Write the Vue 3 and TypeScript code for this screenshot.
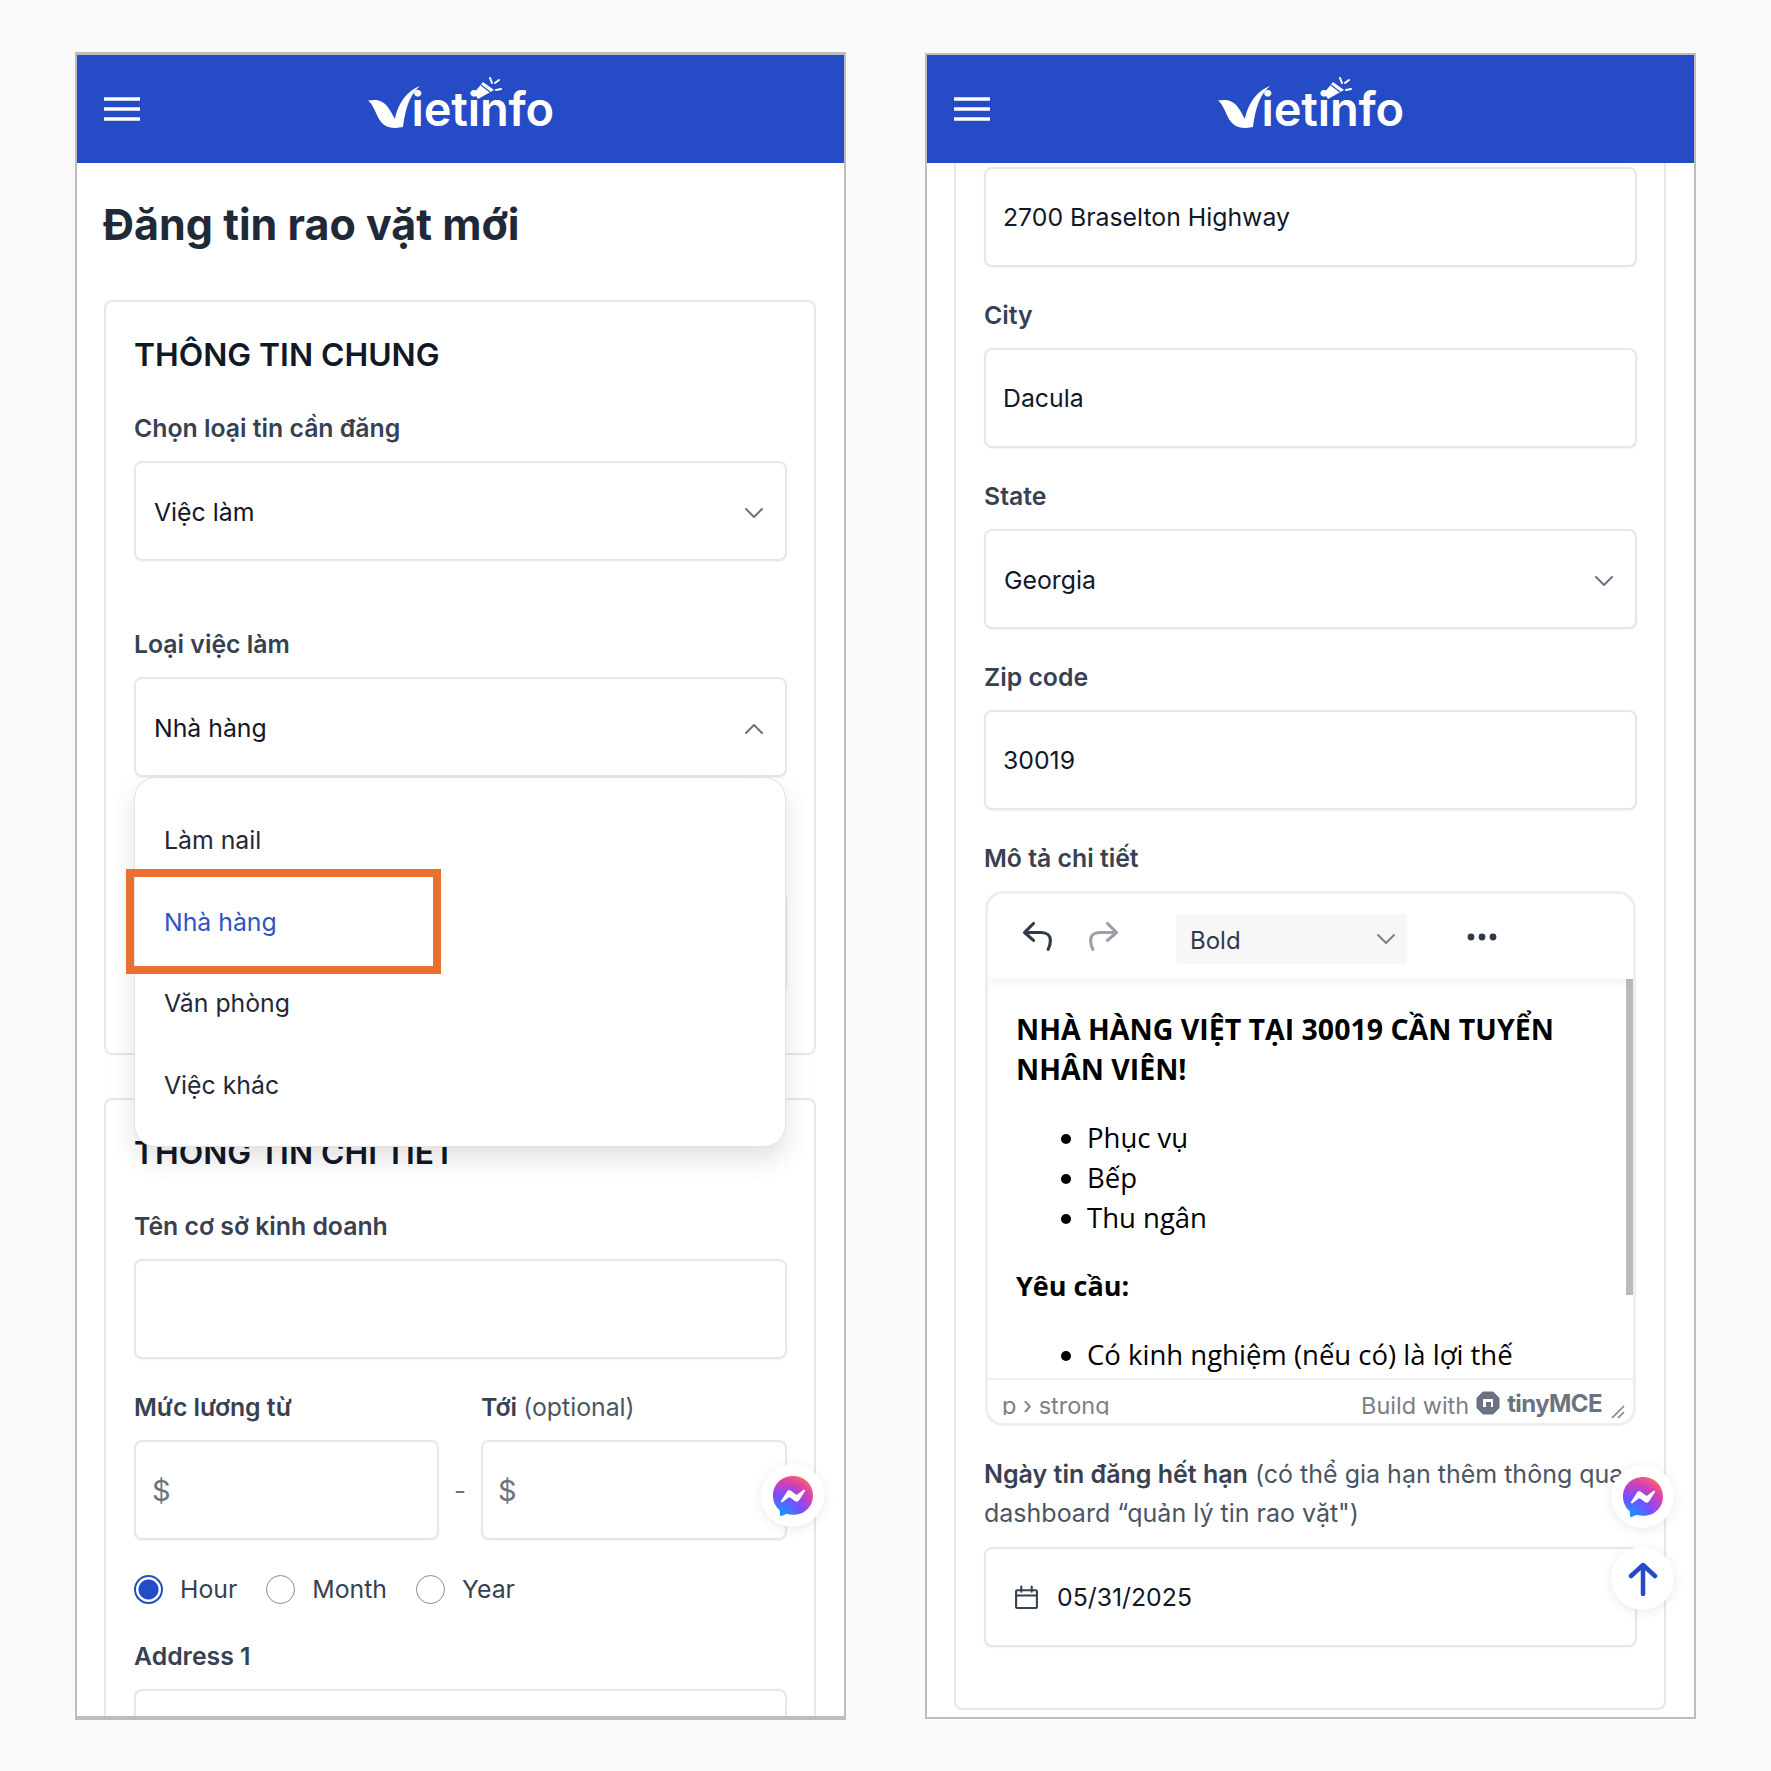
<script setup lang="ts">
import { ref } from "vue";

const jobTypes = ["Làm nail", "Nhà hàng", "Văn phòng", "Việc khác"];
const currentJob = ref("Nhà hàng");

const periods = ["Hour", "Month", "Year"];
const period = ref("Hour");
</script>

<template>
  <div class="page">
    <!-- left phone -->
    <section class="phone phone-left">
      <header class="topbar">
        <svg class="burger" width="36" height="24" viewBox="0 0 36 24">
          <path d="M0 2h36M0 12h36M0 22h36" stroke="#fff" stroke-width="3.4" />
        </svg>
        <div class="logo">
          <svg class="logo-v" width="53" height="43" viewBox="0 0 53 43">
            <path d="M0 14.5C8 13 14 14 19 20c4 5 6 10 8 13C29 22 36 6 52 0 42 9 38 20 35 41l-7 1C16 42 12 36 8 27 5 20 3 17 0 14.5z" fill="#fff" />
          </svg>
          <span class="logo-text">ietinfo</span>
          <svg class="logo-horn" width="29" height="28" viewBox="0 0 29 28">
            <path d="M1 17 10 6l11 8-16 9z" fill="#fff" />
            <path d="M8 9l9 7" stroke="#254bc7" stroke-width="1.2" />
            <path d="M17 2l2 5M22 7l4-3M23 14l5-1" stroke="#fff" stroke-width="2" stroke-linecap="round" />
          </svg>
        </div>
        <span></span>
      </header>

      <main class="content">
        <h1 class="title">Đăng tin rao vặt mới</h1>

        <div class="card card-general">
          <h2 class="card-title">THÔNG TIN CHUNG</h2>

          <label class="label label-first">Chọn loại tin cần đăng</label>
          <div class="select">
            <span>Việc làm</span>
            <svg class="chevron" width="20" height="12" viewBox="0 0 20 12">
              <path d="M2 2l8 8 8-8" fill="none" stroke="#6b7280" stroke-width="2" stroke-linecap="round" stroke-linejoin="round" />
            </svg>
          </div>

          <label class="label label-gap">Loại việc làm</label>
          <div class="select-wrap">
            <div class="select">
              <span>{{ currentJob }}</span>
              <svg class="chevron" width="20" height="12" viewBox="0 0 20 12">
                <path d="M2 10l8-8 8 8" fill="none" stroke="#6b7280" stroke-width="2" stroke-linecap="round" stroke-linejoin="round" />
              </svg>
            </div>
            <ul class="menu">
              <li
                v-for="job in jobTypes"
                :key="job"
                class="menu-item"
                :class="{ active: job === currentJob }"
                @click="currentJob = job"
              >
                {{ job }}
              </li>
            </ul>
            <div class="callout"></div>
          </div>

          <div class="select select-hidden"></div>
        </div>

        <div class="card card-detail">
          <h2 class="card-title">THÔNG TIN CHI TIẾT</h2>

          <label class="label label-business">Tên cơ sở kinh doanh</label>
          <input class="field" type="text" />

          <div class="salary-labels">
            <label class="label">Mức lương từ</label>
            <label class="label">Tới <span class="optional">(optional)</span></label>
          </div>
          <div class="salary">
            <div class="money"><span>$</span></div>
            <span class="dash">-</span>
            <div class="money"><span>$</span></div>
          </div>

          <div class="periods">
            <label v-for="p in periods" :key="p" class="period">
              <input v-model="period" class="radio" type="radio" :value="p" />
              <span>{{ p }}</span>
            </label>
          </div>

          <label class="label label-address">Address 1</label>
          <input class="field" type="text" />
        </div>
      </main>

      <a class="fab fab-chat">
        <svg width="40" height="40" viewBox="2 2 20 20">
          <defs>
            <radialGradient id="chatLeft" cx="0.2" cy="1" r="1.15">
              <stop offset="0" stop-color="#0a9bff" />
              <stop offset="0.45" stop-color="#7a4dff" />
              <stop offset="0.75" stop-color="#d63fb0" />
              <stop offset="1" stop-color="#ff6f5f" />
            </radialGradient>
          </defs>
          <path d="M12 2C6.36 2 2 6.13 2 11.7c0 2.91 1.19 5.44 3.14 7.17.16.14.26.35.27.57l.05 1.78c.02.57.61.94 1.13.71l1.98-.87c.17-.07.36-.09.53-.04.91.25 1.88.38 2.9.38 5.64 0 10-4.13 10-9.7S17.64 2 12 2z" fill="url(#chatLeft)" />
          <path d="M5.99 14.54l2.94-4.66c.47-.74 1.47-.93 2.17-.4l2.34 1.75c.21.16.51.16.72 0l3.16-2.4c.42-.32.97.18.69.63l-2.94 4.66c-.47.74-1.47.93-2.17.4l-2.34-1.75a.6.6 0 0 0-.72 0l-3.16 2.4c-.42.32-.97-.18-.69-.63z" fill="#fff" />
        </svg>
      </a>
    </section>

    <!-- right phone -->
    <section class="phone phone-right">
      <header class="topbar">
        <svg class="burger" width="36" height="24" viewBox="0 0 36 24">
          <path d="M0 2h36M0 12h36M0 22h36" stroke="#fff" stroke-width="3.4" />
        </svg>
        <div class="logo">
          <svg class="logo-v" width="53" height="43" viewBox="0 0 53 43">
            <path d="M0 14.5C8 13 14 14 19 20c4 5 6 10 8 13C29 22 36 6 52 0 42 9 38 20 35 41l-7 1C16 42 12 36 8 27 5 20 3 17 0 14.5z" fill="#fff" />
          </svg>
          <span class="logo-text">ietinfo</span>
          <svg class="logo-horn" width="29" height="28" viewBox="0 0 29 28">
            <path d="M1 17 10 6l11 8-16 9z" fill="#fff" />
            <path d="M8 9l9 7" stroke="#254bc7" stroke-width="1.2" />
            <path d="M17 2l2 5M22 7l4-3M23 14l5-1" stroke="#fff" stroke-width="2" stroke-linecap="round" />
          </svg>
        </div>
        <span></span>
      </header>

      <main class="content">
        <div class="card card-scrolled">
          <input class="field" type="text" value="2700 Braselton Highway" />

          <label class="label label-row">City</label>
          <input class="field" type="text" value="Dacula" />

          <label class="label label-row">State</label>
          <div class="select">
            <span>Georgia</span>
            <svg class="chevron" width="20" height="12" viewBox="0 0 20 12">
              <path d="M2 2l8 8 8-8" fill="none" stroke="#6b7280" stroke-width="2" stroke-linecap="round" stroke-linejoin="round" />
            </svg>
          </div>

          <label class="label label-row">Zip code</label>
          <input class="field" type="text" value="30019" />

          <label class="label label-row">Mô tả chi tiết</label>
          <div class="editor">
            <div class="editor-bar">
              <svg class="tool" width="36" height="36" viewBox="0 0 32 32">
                <path d="M12 4 4 12l8 7M4 12h15c5 0 8 3 8 7 0 3-1 6-2 8" fill="none" stroke="#2f3a4a" stroke-width="2.800" stroke-linecap="round" stroke-linejoin="round" />
              </svg>
              <svg class="tool tool-redo" width="36" height="36" viewBox="0 0 32 32">
                <path d="M20 4l8 8-8 7M28 12H13c-5 0-8 3-8 7 0 3 1 6 2 8" fill="none" stroke="#9aa0a6" stroke-width="2.800" stroke-linecap="round" stroke-linejoin="round" />
              </svg>
              <div class="format">
                <span class="format-name">Bold</span>
                <svg width="20" height="12" viewBox="0 0 20 12">
                  <path d="M2 2l8 8 8-8" fill="none" stroke="#7b8088" stroke-width="2" stroke-linecap="round" stroke-linejoin="round" />
                </svg>
              </div>
              <svg class="more" width="30" height="8" viewBox="0 0 30 8">
                <circle cx="4" cy="4" r="3.4" fill="#2f3a4a" />
                <circle cx="15" cy="4" r="3.4" fill="#2f3a4a" />
                <circle cx="26" cy="4" r="3.4" fill="#2f3a4a" />
              </svg>
            </div>

            <div class="editor-body">
              <p class="headline">NHÀ HÀNG VIỆT TẠI 30019 CẦN TUYỂN NHÂN VIÊN!</p>
              <ul>
                <li>Phục vụ</li>
                <li>Bếp</li>
                <li>Thu ngân</li>
              </ul>
              <p class="strong">Yêu cầu:</p>
              <ul>
                <li>Có kinh nghiệm (nếu có) là lợi thế</li>
              </ul>
              <div class="scroll-thumb"></div>
            </div>

            <div class="editor-status">
              <span class="path">p › strong</span>
              <span class="brand">
                Build with
                <svg width="24" height="24" viewBox="0 0 24 24">
                  <path d="M7 1h10l6 6v10l-6 6H7l-6-6V7z" fill="#6b7280" stroke="#6b7280" stroke-width="1" stroke-linejoin="round" />
                  <path d="M7 8h10v8H7z" fill="#fff" />
                  <path d="M10 11h5v6h-5z" fill="#6b7280" />
                </svg>
                <b>tinyMCE</b>
                <svg class="grip" width="14" height="14" viewBox="0 0 14 14">
                  <path d="M1 13 13 1M7 13l6-6" stroke="#7b8088" stroke-width="1.6" />
                </svg>
              </span>
            </div>
          </div>

          <p class="expire">
            <b>Ngày tin đăng hết hạn</b> (có thể gia hạn thêm thông qua dashboard “quản lý tin rao vặt")
          </p>
          <div class="date">
            <svg width="25" height="25" viewBox="0 0 24 24">
              <path d="M3 5h18a1 1 0 0 1 1 1v15a1 1 0 0 1-1 1H3a1 1 0 0 1-1-1V6a1 1 0 0 1 1-1zM2 10h20M7 1.500v5M17 1.500v5" fill="none" stroke="#374151" stroke-width="2" stroke-linecap="round" />
            </svg>
            <span>05/31/2025</span>
          </div>
        </div>
      </main>

      <a class="fab fab-chat">
        <svg width="40" height="40" viewBox="2 2 20 20">
          <defs>
            <radialGradient id="chatRight" cx="0.2" cy="1" r="1.15">
              <stop offset="0" stop-color="#0a9bff" />
              <stop offset="0.45" stop-color="#7a4dff" />
              <stop offset="0.75" stop-color="#d63fb0" />
              <stop offset="1" stop-color="#ff6f5f" />
            </radialGradient>
          </defs>
          <path d="M12 2C6.36 2 2 6.13 2 11.7c0 2.91 1.19 5.44 3.14 7.17.16.14.26.35.27.57l.05 1.78c.02.57.61.94 1.13.71l1.98-.87c.17-.07.36-.09.53-.04.91.25 1.88.38 2.9.38 5.64 0 10-4.13 10-9.7S17.64 2 12 2z" fill="url(#chatRight)" />
          <path d="M5.99 14.54l2.94-4.66c.47-.74 1.47-.93 2.17-.4l2.34 1.75c.21.16.51.16.72 0l3.16-2.4c.42-.32.97.18.69.63l-2.94 4.66c-.47.74-1.47.93-2.17.4l-2.34-1.75a.6.6 0 0 0-.72 0l-3.16 2.4c-.42.32-.97-.18-.69-.63z" fill="#fff" />
        </svg>
      </a>
      <a class="fab fab-top">
        <svg width="30" height="34" viewBox="0 0 30 34">
          <path d="M15 32V3M3 14 15 3l12 11" fill="none" stroke="#254bc7" stroke-width="4.500" stroke-linecap="round" stroke-linejoin="round" />
        </svg>
      </a>
    </section>
  </div>
</template>

<style>
html,
body {
  margin: 0;
  background: #fafafa;
}
</style>

<style scoped>
.page {
  width: 1771px;
  height: 1771px;
  box-sizing: border-box;
  display: flex;
  align-items: flex-start;
  gap: 79px;
  padding: 52px 75px 0;
  background: #fafafa;
  font-family: Inter, "Noto Sans", sans-serif;
  color: #111827;
}

.phone {
  position: relative;
  width: 771px;
  box-sizing: border-box;
  background: #fff;
  overflow: hidden;
  border: 2px solid #bdbdbd;
}

.phone-left {
  height: 1668px;
  border-top-width: 3px;
  border-bottom-width: 4px;
}

.phone-right {
  height: 1666px;
  margin-top: 1px;
  border-top-width: 2px;
  border-bottom-width: 2px;
}

.topbar {
  height: 108px;
  padding: 0 27px;
  display: grid;
  grid-template-columns: 1fr auto 1fr;
  align-items: center;
  background: #254bc7;
}

.logo {
  position: relative;
  display: flex;
  align-items: flex-end;
  height: 51px;
  width: 186px;
  margin-bottom: 11px;
}

.logo-v {
  flex: none;
  margin-right: -9px;
}

.logo-text {
  font-family: Inter, sans-serif;
  font-weight: 600;
  font-size: 47px;
  line-height: 40px;
  letter-spacing: -0.15px;
  color: #fff;
}

.logo-horn {
  position: absolute;
  left: 105px;
  top: -2px;
}

.content {
  padding: 0 28px 0 27px;
}

.title {
  margin: 0 0 54px -1px;
  padding-top: 39px;
  font-size: 43px;
  line-height: 44px;
  font-weight: 700;
  color: #1f2937;
}

.card {
  border: 2px solid #e5e7eb;
  border-radius: 8px;
  padding: 0 27px 0 28px;
  background: #fff;
}

.card-general {
  padding-top: 33px;
  padding-bottom: 63px;
  height: 755px;
  box-sizing: border-box;
}

.card-detail {
  margin-top: 43px;
  padding-top: 33px;
}

.card-scrolled {
  border-top: 0;
  border-radius: 0 0 8px 8px;
  padding-top: 4px;
  padding-bottom: 61px;
}

.card-title {
  margin: 0;
  font-size: 31.800px;
  line-height: 40px;
  font-weight: 600;
  color: #111827;
}

.label {
  display: block;
  margin-bottom: 18px;
  font-size: 24.800px;
  line-height: 30px;
  font-weight: 600;
  color: #374151;
}

.label-first {
  margin-top: 38px;
}

.label-gap {
  margin-top: 68px;
}

.label-business {
  margin-top: 38px;
}

.label-address {
  margin-top: 37px;
}

.label-row {
  margin-top: 33px;
}

.optional {
  font-weight: 400;
  color: #4b5563;
}

.field,
.select,
.money,
.date {
  display: flex;
  align-items: center;
  width: 100%;
  height: 100px;
  box-sizing: border-box;
  background: #fff;
  border: 2px solid #e5e7eb;
  border-radius: 8px;
  box-shadow: 0 1px 2px rgba(0, 0, 0, 0.05);
  font-family: inherit;
  font-size: 24.800px;
  color: #111827;
}

.field {
  padding: 0 17px;
  outline: none;
}

.select {
  justify-content: space-between;
  padding: 1px 21px 0 18px;
}

.chevron {
  margin-top: 2px;
}

.select-wrap {
  position: relative;
}

.select-hidden {
  margin-top: 115px;
}

.menu {
  position: absolute;
  z-index: 2;
  top: 100%;
  left: 0;
  right: 1px;
  margin: 0;
  padding: 22px 0 20px;
  list-style: none;
  background: #fff;
  border: 1px solid #dfe2e7;
  border-radius: 22px;
  box-shadow: 0 12px 26px rgba(0, 0, 0, 0.12);
}

.menu-item {
  height: 81.500px;
  line-height: 81.500px;
  padding-left: 29px;
  font-size: 24.800px;
  color: #1f2937;
}

.menu-item.active {
  color: #2f54c3;
}

.callout {
  position: absolute;
  z-index: 3;
  left: -8px;
  top: 192px;
  width: 315px;
  height: 105px;
  box-sizing: border-box;
  border: 8.500px solid #ea7030;
}

.salary-labels {
  display: grid;
  grid-template-columns: 305px 1fr;
  column-gap: 42px;
  margin-top: 33px;
}

.salary {
  display: grid;
  grid-template-columns: 305px 42px 1fr;
  align-items: center;
}

.money {
  padding-left: 16px;
  font-size: 29px;
  color: #6b7280;
}

.money + .dash + .money {
  padding-left: 15px;
}

.dash {
  text-align: center;
  font-size: 26px;
  color: #6b7280;
}

.periods {
  display: flex;
  gap: 29px;
  margin-top: 34px;
}

.period {
  display: flex;
  align-items: center;
  gap: 17px;
  height: 30px;
  font-size: 24.800px;
  color: #374151;
}

.radio {
  appearance: none;
  width: 29px;
  height: 29px;
  margin: 0;
  box-sizing: border-box;
  border: 1.500px solid #8a8a8a;
  border-radius: 50%;
}

.radio:checked {
  border: 2px solid #254bc7;
  background: radial-gradient(circle, #254bc7 0 9.500px, #fff 10.500px);
}

.editor {
  height: 535px;
  margin: 0 1px;
  box-sizing: border-box;
  display: flex;
  flex-direction: column;
  border: 3px solid #eeeeee;
  border-radius: 18px;
  overflow: hidden;
}

.editor-bar {
  position: relative;
  z-index: 1;
  flex: none;
  height: 85px;
  box-sizing: border-box;
  display: flex;
  align-items: center;
  padding-left: 32px;
  background: #fff;
  box-shadow: 0 3px 10px rgba(0, 0, 0, 0.06);
}

.tool-redo {
  margin-left: 29px;
}

.format {
  display: flex;
  align-items: center;
  justify-content: space-between;
  width: 231px;
  height: 50px;
  margin: 4px 0 0 55px;
  padding: 0 11px 0 14px;
  box-sizing: border-box;
  background: #f7f7f7;
  border-radius: 4px;
  font-size: 24px;
  color: #2f3a4a;
}

.format-name {
  margin-top: 4px;
}

.more {
  margin-left: 60px;
}

.editor-body {
  position: relative;
  flex: 1;
  min-height: 0;
  overflow: hidden;
  padding: 30px 0 0 28px;
  font-family: "Open Sans", sans-serif;
  font-size: 27.500px;
  line-height: 40px;
  color: #000;
}

.editor-body p {
  margin: 0;
}

.editor-body .headline {
  font-size: 28.500px;
  font-weight: 700;
  padding-right: 40px;
}

.editor-body .strong {
  font-size: 27px;
  font-weight: 700;
}

.editor-body ul {
  margin: 28.500px 0;
  padding-left: 71px;
}

.scroll-thumb {
  position: absolute;
  top: 0;
  right: 0;
  width: 7px;
  height: 316px;
  background: #bbbbbb;
}

.editor-status {
  flex: none;
  height: 45px;
  overflow: hidden;
  box-sizing: border-box;
  display: flex;
  justify-content: space-between;
  padding: 11px 8px 0 14px;
  border-top: 2px solid #eeeeee;
  font-size: 23.500px;
  line-height: 30px;
  color: #7b8088;
}

.path {
  display: block;
  height: 24px;
  overflow: hidden;
}

.brand {
  display: flex;
  align-items: flex-start;
  gap: 7px;
}

.brand b {
  font-size: 24px;
  line-height: 26px;
  font-weight: 700;
  letter-spacing: -0.6px;
  color: #6b7280;
}

.brand .grip {
  margin: 14px 0 0 2px;
}

.expire {
  margin: 29px 0 14px;
  font-size: 25px;
  line-height: 39px;
  color: #4b5563;
}

.expire b {
  font-weight: 600;
  color: #374151;
}

.date {
  gap: 18px;
  padding-left: 28px;
}

.fab {
  position: absolute;
  z-index: 4;
  right: 20px;
  display: flex;
  align-items: center;
  justify-content: center;
  width: 63px;
  height: 63px;
  border-radius: 50%;
  background: #fff;
  box-shadow: 0 2px 12px rgba(0, 0, 0, 0.09);
}

.fab-chat {
  bottom: 189px;
}

.fab-top {
  bottom: 107px;
}
</style>
